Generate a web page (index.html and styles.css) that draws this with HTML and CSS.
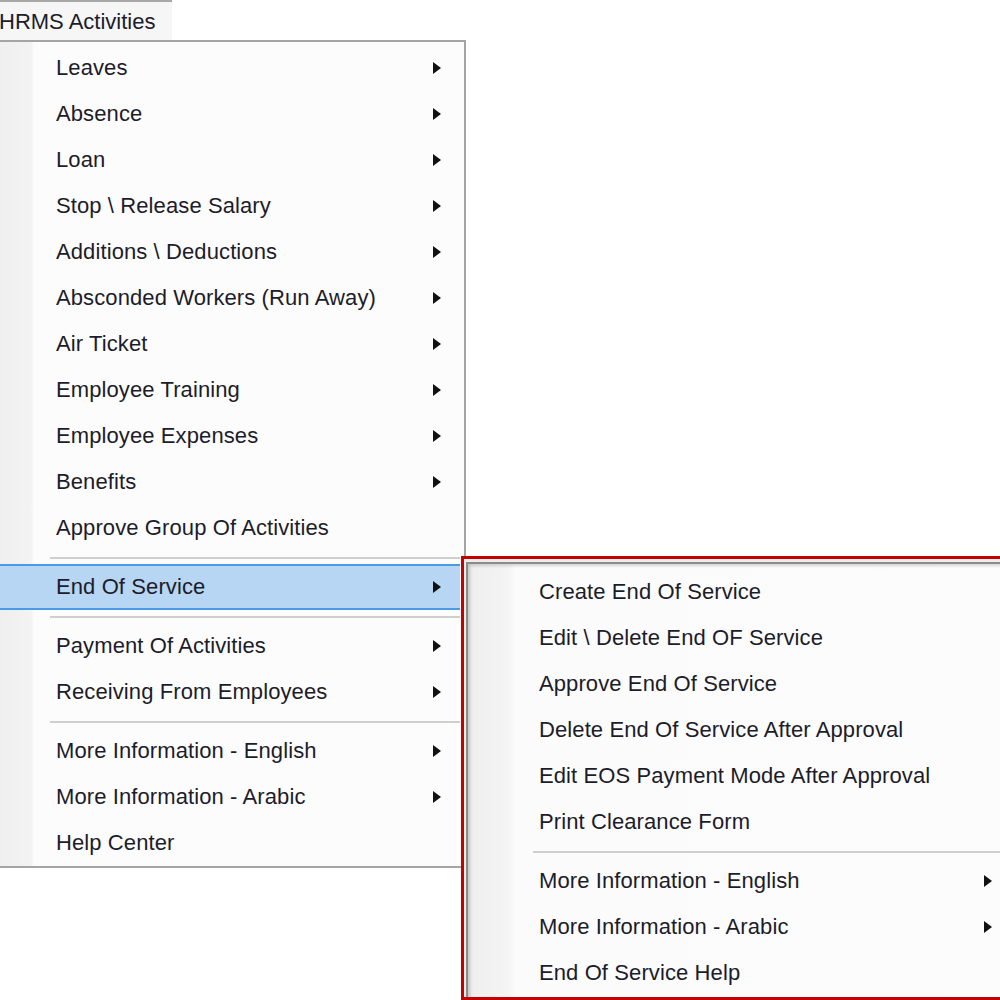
FILE: index.html
```html
<!DOCTYPE html>
<html>
<head>
<meta charset="utf-8">
<link rel="stylesheet" href="styles.css">
</head>
<body>
<div class="menubar">
  <div class="menubar-item">HRMS Activities</div>
</div>

<div class="menu main-menu">
  <div class="item"><span class="label">Leaves</span><span class="arrow"></span></div>
  <div class="item"><span class="label">Absence</span><span class="arrow"></span></div>
  <div class="item"><span class="label">Loan</span><span class="arrow"></span></div>
  <div class="item"><span class="label">Stop \ Release Salary</span><span class="arrow"></span></div>
  <div class="item"><span class="label">Additions \ Deductions</span><span class="arrow"></span></div>
  <div class="item"><span class="label">Absconded Workers (Run Away)</span><span class="arrow"></span></div>
  <div class="item"><span class="label">Air Ticket</span><span class="arrow"></span></div>
  <div class="item"><span class="label">Employee Training</span><span class="arrow"></span></div>
  <div class="item"><span class="label">Employee Expenses</span><span class="arrow"></span></div>
  <div class="item"><span class="label">Benefits</span><span class="arrow"></span></div>
  <div class="item"><span class="label">Approve Group Of Activities</span></div>
  <div class="sep"></div>
  <div class="item active"><span class="label">End Of Service</span><span class="arrow"></span></div>
  <div class="sep"></div>
  <div class="item"><span class="label">Payment Of Activities</span><span class="arrow"></span></div>
  <div class="item"><span class="label">Receiving From Employees</span><span class="arrow"></span></div>
  <div class="sep"></div>
  <div class="item"><span class="label">More Information - English</span><span class="arrow"></span></div>
  <div class="item"><span class="label">More Information - Arabic</span><span class="arrow"></span></div>
  <div class="item"><span class="label">Help Center</span></div>
</div>

<div class="highlight-frame">
  <div class="menu sub-menu">
    <div class="item"><span class="label">Create End Of Service</span></div>
    <div class="item"><span class="label">Edit \ Delete End OF Service</span></div>
    <div class="item"><span class="label">Approve End Of Service</span></div>
    <div class="item"><span class="label">Delete End Of Service After Approval</span></div>
    <div class="item"><span class="label">Edit EOS Payment Mode After Approval</span></div>
    <div class="item"><span class="label">Print Clearance Form</span></div>
    <div class="sep"></div>
    <div class="item"><span class="label">More Information - English</span><span class="arrow"></span></div>
    <div class="item"><span class="label">More Information - Arabic</span><span class="arrow"></span></div>
    <div class="item"><span class="label">End Of Service Help</span></div>
  </div>
</div>
</body>
</html>
```

FILE: styles.css
```css
html, body {
  margin: 0;
  padding: 0;
  width: 1000px;
  height: 1000px;
  overflow: hidden;
  background: #ffffff;
}

body {
  position: relative;
  font-family: "Liberation Sans", Arial, sans-serif;
  font-size: 22px;
  letter-spacing: 0.1px;
  color: #1c1c2a;
}

.menubar {
  position: absolute;
  left: 0;
  top: 0;
  z-index: 3;
}

.menubar-item {
  width: 172px;
  height: 40px;
  box-sizing: border-box;
  padding-top: 7px;
  background: #f6f6f6;
  border-top: 2px solid #a8a8a8;
  line-height: 26px;
  white-space: nowrap;
  text-indent: -1px;
  letter-spacing: 0;
}

.menu {
  position: absolute;
  box-sizing: border-box;
  display: flex;
  flex-direction: column;
  background: #ffffff;
}

.main-menu {
  left: 0;
  top: 40px;
  width: 466px;
  height: 828px;
  border-top: 2px solid #a5a5a5;
  border-right: 2px solid #a5a5a5;
  border-bottom: 2px solid #a5a5a5;
  padding-top: 3px;
  background: linear-gradient(to right, #efefef 0, #f3f3f3 31px, #fcfcfc 34px, #fcfcfc 100%);
}

.item {
  height: 46px;
  display: flex;
  align-items: center;
  box-sizing: border-box;
  position: relative;
  white-space: nowrap;
}

.main-menu .item {
  padding-left: 56px;
  margin-right: 4px;
}

.label {
  flex: 1;
  line-height: 26px;
}

.arrow {
  width: 0;
  height: 0;
  border-top: 6px solid transparent;
  border-bottom: 6px solid transparent;
  border-left: 8px solid #111111;
  margin-right: 19px;
}

.main-menu .item.active {
  background: #b6d6f3;
  border-top: 2px solid #4a9ae6;
  border-bottom: 2px solid #4a9ae6;
}

.sep {
  height: 13px;
  box-sizing: border-box;
  padding-top: 6px;
}

.sep::after {
  content: "";
  display: block;
  height: 2px;
  background: #cfcfcf;
}

.main-menu .sep {
  margin-left: 50px;
  margin-right: 4px;
}

.highlight-frame {
  position: absolute;
  left: 461px;
  top: 556px;
  width: 580px;
  height: 444px;
  box-sizing: border-box;
  border: 3px solid #c40000;
  background: #ececec;
}

.sub-menu {
  left: 2px;
  top: 3px;
  right: 0;
  bottom: 0;
  border-top: 2px solid #8c8c8c;
  border-left: 2px solid #8c8c8c;
  padding-top: 5px;
  background: linear-gradient(to right, #e6e6e6 0, #efefef 6px, #f4f4f4 40px, #fbfbfb 48px, #fcfcfc 100%);
  box-shadow: inset 2px 2px 3px rgba(0,0,0,0.15);
}

.sub-menu .item {
  padding-left: 71px;
  width: 543px;
}

.sub-menu .sep {
  margin-left: 65px;
}
```
